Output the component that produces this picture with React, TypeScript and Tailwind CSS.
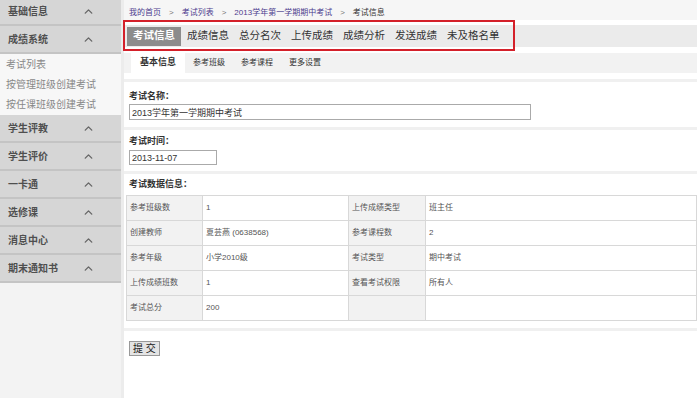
import { ChevronUp } from "lucide-react";

const MENUS_TOP = ["基础信息", "成绩系统"];
const SUB_ITEMS = ["考试列表", "按管理班级创建考试", "按任课班级创建考试"];
const MENUS_BOTTOM = ["学生评教", "学生评价", "一卡通", "选修课", "消息中心", "期末通知书"];

const TABS = ["考试信息", "成绩信息", "总分名次", "上传成绩", "成绩分析", "发送成绩", "未及格名单"];
const SUB_TABS = ["基本信息", "参考班级", "参考课程", "更多设置"];

const ROWS = [
    ["参考班级数", "1", "上传成绩类型", "班主任"],
    ["创建教师", "夏芸燕 (0638568)", "参考课程数", "2"],
    ["参考年级", "小学2010级", "考试类型", "期中考试"],
    ["上传成绩班数", "1", "查看考试权限", "所有人"],
    ["考试总分", "200", "", ""],
];

function MenuHeader({ label }: { label: string }) {
    return (
        <div className="flex h-[28px] items-center justify-between border-b-2 border-[#c4c4c4] bg-[#d6d6d6] pl-[8px] pr-[26px]">
            <span className="text-[10px] font-bold text-[#4f4f4f]">{label}</span>
            <ChevronUp className="h-[13px] w-[13px] text-[#666]" strokeWidth={2.5} />
        </div>
    );
}

function Divider() {
    return <div className="h-[3px] bg-[#f0f0f0]" />;
}

export default function App() {
    return (
        <div
            className="flex h-[398px] w-[700px] overflow-hidden bg-white"
            style={{ fontFamily: '"Liberation Sans", "Noto Sans CJK SC", sans-serif' }}
        >
            {/* sidebar */}
            <div className="flex w-[121px] shrink-0 flex-col bg-[#f3f3f3]">
                <div className="-mt-[2px]">
                    {MENUS_TOP.map((m) => (
                        <MenuHeader key={m} label={m} />
                    ))}
                </div>
                <div className="flex h-[61px] flex-col justify-center gap-[4px] bg-[#f7f7f7] pl-[6px]">
                    {SUB_ITEMS.map((s) => (
                        <div key={s} className="text-[10px] leading-[16px] text-[#888]">
                            {s}
                        </div>
                    ))}
                </div>
                {MENUS_BOTTOM.map((m) => (
                    <MenuHeader key={m} label={m} />
                ))}
            </div>
            <div className="w-[3px] shrink-0 bg-[#ececec]" />

            {/* main */}
            <div className="flex w-[573px] flex-col">
                <div className="flex h-[20px] items-end gap-[8px] bg-[#f6f6f6] pb-[2px] pl-[5px] text-[8px] leading-[10px] text-[#333]">
                    <span className="text-[#4d3c8e]">我的首页</span>
                    <span className="text-[#777]">&gt;</span>
                    <span className="text-[#4d3c8e]">考试列表</span>
                    <span className="text-[#777]">&gt;</span>
                    <span className="text-[#4d3c8e]">2013学年第一学期期中考试</span>
                    <span className="text-[#777]">&gt;</span>
                    <span>考试信息</span>
                </div>

                <div className="relative h-[31px] pt-[5px]">
                    <div className="flex h-[22px] items-center bg-[#ebebeb] pl-[3px]">
                        {TABS.map((t, i) => (
                            <span
                                key={t}
                                className={
                                    i === 0
                                        ? "mr-[1px] flex h-[19px] items-center whitespace-nowrap bg-[#8c8c8c] px-[6px] text-[10.5px] font-bold text-white"
                                        : "whitespace-nowrap px-[5px] text-[10.5px] font-normal text-[#333]"
                                }
                            >
                                {t}
                            </span>
                        ))}
                    </div>
                    <div className="absolute left-[-1px] top-0 h-[31px] w-[392px] border-2 border-[#d4202a]" />
                </div>

                <div className="mt-[2px] flex h-[20px] items-center bg-[#f2f2f2] pl-[7px] text-[8px] text-[#333]">
                    {SUB_TABS.map((t, i) => (
                        <span
                            key={t}
                            className={
                                i === 0
                                    ? "flex h-full items-center bg-white px-[9px] text-[9px] font-bold"
                                    : "px-[8px]"
                            }
                        >
                            {t}
                        </span>
                    ))}
                </div>

                <div className="mt-[6px]">
                    <Divider />
                </div>
                <div className="px-[5px] pb-[7px] pt-[8px]">
                    <div className="text-[9px] font-bold leading-[12px] text-[#333]">考试名称：</div>
                    <input
                        readOnly
                        value="2013学年第一学期期中考试"
                        className="mt-[2px] block h-[16px] w-[402px] border border-[#aaa] px-[2px] text-[9px] text-[#333] outline-none"
                    />
                </div>
                <Divider />
                <div className="px-[5px] pb-[6px] pt-[5px]">
                    <div className="text-[9px] font-bold leading-[12px] text-[#333]">考试时间：</div>
                    <input
                        readOnly
                        value="2013-11-07"
                        className="mt-[3px] block h-[15px] w-[88px] border border-[#aaa] px-[2px] text-[9px] text-[#333] outline-none"
                    />
                </div>
                <Divider />
                <div className="px-[2px] pt-[4px]">
                    <div className="pl-[3px] text-[9px] font-bold leading-[12px] text-[#333]">考试数据信息：</div>
                    <table className="mt-[5px] w-[571px] border-collapse border border-[#d4d4d4] text-[8px] text-[#555]">
                        <tbody>
                            {ROWS.map((r, i) => (
                                <tr key={i} className="h-[25px]">
                                    <td className="w-[76px] border border-[#d8d8d8] bg-[#f2f2f2] pl-[3px]">{r[0]}</td>
                                    <td className="w-[146px] border border-[#d8d8d8] bg-white pl-[3px]">{r[1]}</td>
                                    <td className="w-[77px] border border-[#d8d8d8] bg-[#f2f2f2] pl-[3px]">{r[2]}</td>
                                    <td className="border border-[#d8d8d8] bg-white pl-[3px]">{r[3]}</td>
                                </tr>
                            ))}
                        </tbody>
                    </table>
                </div>
                <div className="mt-[7px]">
                    <Divider />
                </div>
                <div className="px-[5px] pt-[4px]">
                    <button className="h-[15px] border border-[#999] bg-[#e4e4e4] px-[3px] text-[10px] leading-[13px] text-[#222]">
                        提 交
                    </button>
                </div>
            </div>
        </div>
    );
}
